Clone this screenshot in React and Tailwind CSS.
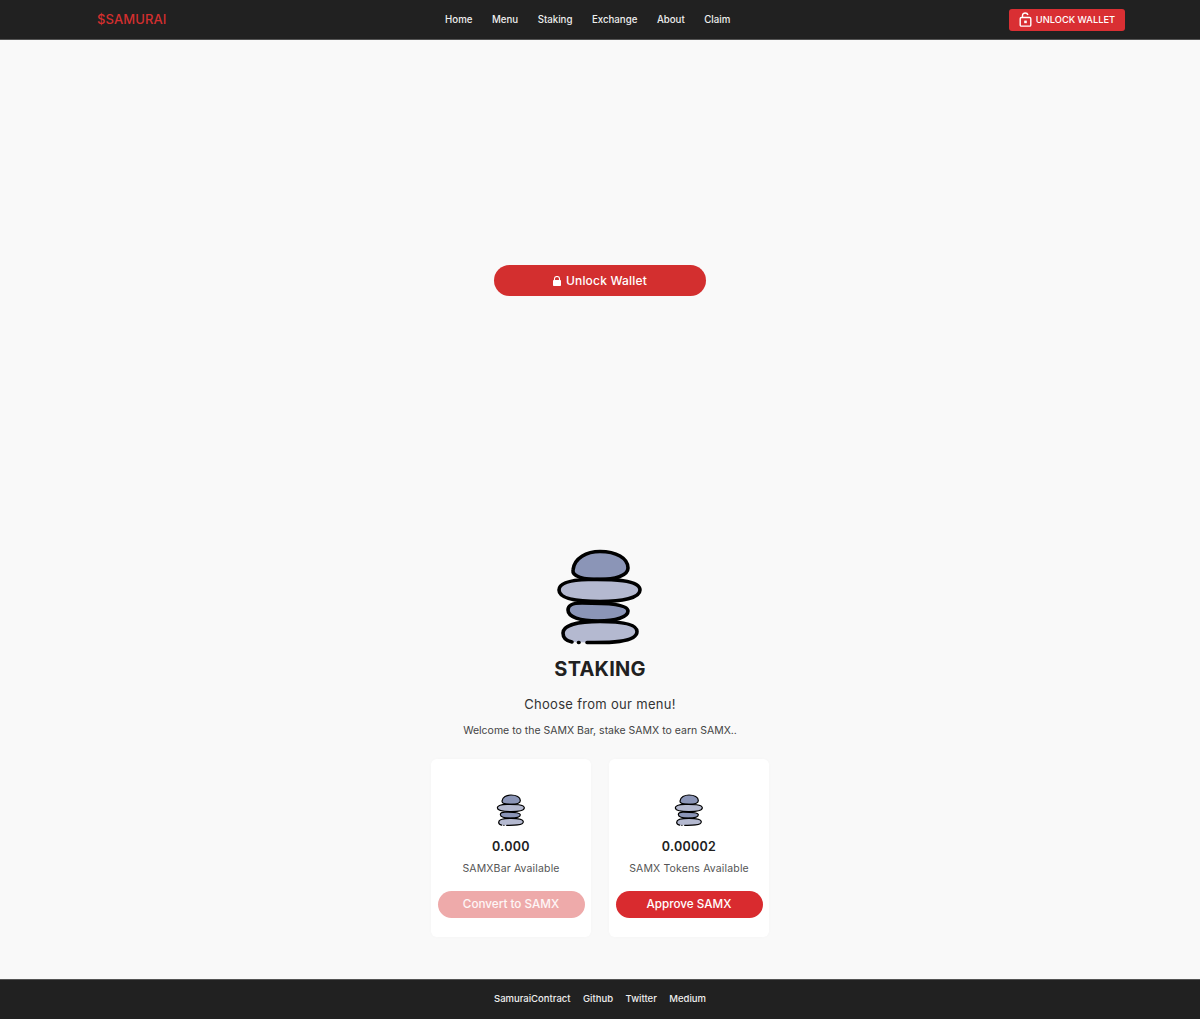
const font = "font-['Inter','Open_Sans',sans-serif]";

function Stones({ className }) {
  return (
    <svg viewBox="0 0 120 110" className={className} fill="none" stroke="#000" strokeWidth="3.6" strokeLinecap="round" strokeLinejoin="round">
      <path d="M33 30C34 18 47 11.5 60 11.5C76 11.5 88 18 88 28C88 36 74 39.5 60 39.5C44 39.5 32 37 33 30Z" fill="#8b95b7" />
      <path d="M19 50C19 43 30 40 48 39.5C72 39 100 40 100 50C100 58 82 61.5 60 61.5C38 61.5 19 59 19 50Z" fill="#b4b9d0" />
      <path d="M28 70C28 65 32 63 42 63C56 63 88 63 88 71C88 77 76 81 58 81C40 81 28 77 28 70Z" fill="#8b95b7" />
      <path d="M47 102.5C60 102.5 97 104 97 91.5C97 84 82 81.5 60 81.5C38 81.5 23 85 23 93C23 98 27 101 32 102" fill="#b4b9d0" />
      <path d="M38.5 102.5L39 102.5" />
    </svg>
  );
}

function StakeCard({ value, label, action, disabled }) {
  return (
    <div className="w-40 h-[178px] bg-white rounded-md shadow-[0_0_4px_rgba(0,0,0,0.02)] flex flex-col items-center pt-8 px-[6.5px]">
      <Stones className="w-10 h-[37px]" />
      <div className="mt-[9px] text-[12.5px] leading-5 font-semibold text-[#212121] tracking-[0.3px]">{value}</div>
      <div className="mt-1 text-[10.5px] leading-4 text-[#555] tracking-[0.15px] whitespace-nowrap">{label}</div>
      <button className={`mt-[14px] w-full h-[27px] rounded-full text-[11.7px] font-medium text-white ${disabled ? 'bg-[#eeaaaa] text-white/90' : 'bg-[#d92b2f]'}`}>
        {action}
      </button>
    </div>
  );
}

export default function App() {
  const navLinks = ['Home', 'Menu', 'Staking', 'Exchange', 'About', 'Claim'];
  const footerLinks = ['SamuraiContract', 'Github', 'Twitter', 'Medium'];

  return (
    <div className={`${font} min-h-[1019px] bg-[#f9f9f9] flex flex-col`}>
      {/* Header */}
      <header className="h-10 bg-[#212121] border-b border-[#555] flex items-center justify-between pl-[97px] pr-[75px]">
        <div className="text-[13px] font-medium text-[#d32f2f] tracking-[0.1px]">$SAMURAI</div>
        <nav className="flex items-center gap-[19.5px] pt-px text-[9.7px] font-medium text-[#eee]">
          {navLinks.map((link) => (
            <a key={link} href="#">{link}</a>
          ))}
        </nav>
        <button className="w-[116px] h-[22px] bg-[#d92f33] rounded-[3px] flex items-center justify-center gap-[4px] text-white text-[9.3px] font-medium">
          <svg width="13" height="15" viewBox="0 0 13 15" fill="none" stroke="#fff" strokeWidth="1.4">
            <rect x="1.2" y="5.5" width="10.6" height="8.6" rx="1.2" />
            <path d="M3.5 5.5V3.4C3.5 1.9 4.8 1 6.2 1C7.6 1 8.6 1.7 9 3" />
            <rect x="5.2" y="8.6" width="2.6" height="2.6" fill="#fff" stroke="none" />
          </svg>
          <span className="pt-px">UNLOCK WALLET</span>
        </button>
      </header>

      {/* Unlock */}
      <div className="flex justify-center pt-[225px]">
        <button className="w-[212px] h-[31px] rounded-full bg-[#d32f2f] flex items-center justify-center gap-[5px] text-white text-[12px] font-medium tracking-[0.2px]">
          <svg width="8" height="10" viewBox="0 0 8 10" fill="#fff">
            <path d="M1.5 4V2.8C1.5 1.3 2.6 0.5 4 0.5C5.4 0.5 6.5 1.3 6.5 2.8V4" fill="none" stroke="#fff" strokeWidth="1.1" />
            <rect x="0" y="4" width="8" height="6" rx="0.8" />
          </svg>
          Unlock Wallet
        </button>
      </div>

      {/* Staking */}
      <main className="flex-1 flex flex-col items-center pt-[244px]">
        <Stones className="w-[120px] h-[110px]" />
        <h1 className="mt-[5px] text-[20px] leading-7 font-bold text-[#212121] tracking-[0.2px]">STAKING</h1>
        <p className="mt-[11px] text-[13px] leading-5 text-[#333] tracking-[0.3px]">Choose from our menu!</p>
        <p className="mt-[7px] text-[10.5px] leading-5 text-[#444]">Welcome to the SAMX Bar, stake SAMX to earn SAMX..</p>
        <div className="mt-[18px] flex gap-[18px]">
          <StakeCard value="0.000" label="SAMXBar Available" action="Convert to SAMX" disabled />
          <StakeCard value="0.00002" label="SAMX Tokens Available" action="Approve SAMX" />
        </div>
      </main>

      {/* Footer */}
      <footer className="h-10 bg-[#212121] border-t border-[#555] flex items-center justify-center gap-[12.5px] text-[9.5px] font-medium text-[#eee]">
        {footerLinks.map((link) => (
          <a key={link} href="#">{link}</a>
        ))}
      </footer>
    </div>
  );
}
